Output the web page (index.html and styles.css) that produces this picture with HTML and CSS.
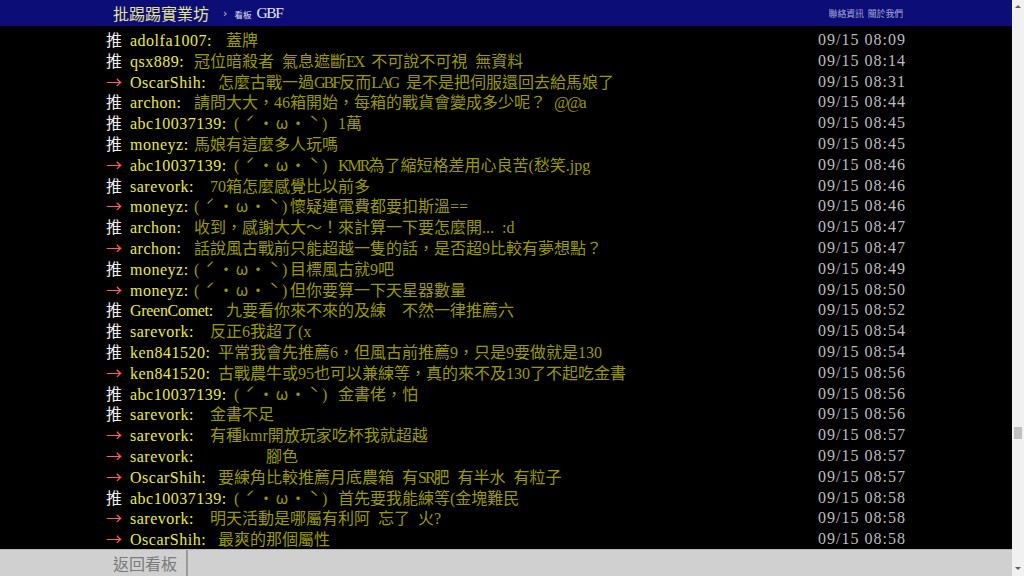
FILE: index.html
```html
<!DOCTYPE html>
<html lang="zh-Hant">
<head>
<meta charset="utf-8">
<title>GBF - 批踢踢實業坊</title>
<link rel="stylesheet" href="styles.css">
</head>
<body>
<div class="window">
  <div class="page">
    <header class="topbar">
      <div class="bar-inner">
        <div class="brand">
          <span class="logo">批踢踢實業坊</span>
          <span class="crumb-sep">›</span>
          <span class="crumb-label">看板</span>
          <span class="crumb-board">GBF</span>
        </div>
        <nav class="links">
          <span class="link">聯絡資訊</span>
          <span class="link">關於我們</span>
        </nav>
      </div>
    </header>

    <main class="screen">
      <div class="screen-inner">
        <div class="push"><div class="push-main"><span class="tag t-push">推</span><span class="uid w12">adolfa1007: </span><span class="msg">蓋牌</span></div><span class="time">09/15 08:09</span></div>
        <div class="push"><div class="push-main"><span class="tag t-push">推</span><span class="uid w8">qsx889: </span><span class="msg">冠位暗殺者 氣息遮斷<span class="en">EX</span> 不可說不可視 無資料</span></div><span class="time">09/15 08:14</span></div>
        <div class="push"><div class="push-main"><span class="tag t-arrow">→</span><span class="uid w11">OscarShih: </span><span class="msg">怎麼古戰一過<span class="en">GBF</span>反而<span class="en">LAG</span> 是不是把伺服還回去給馬娘了</span></div><span class="time">09/15 08:31</span></div>
        <div class="push"><div class="push-main"><span class="tag t-push">推</span><span class="uid w8">archon: </span><span class="msg">請問大大，46箱開始，每箱的戰貨會變成多少呢？ <span class="en">@@</span>a</span></div><span class="time">09/15 08:44</span></div>
        <div class="push"><div class="push-main"><span class="tag t-push">推</span><span class="uid w13">abc10037139: </span><span class="msg"><span class="kao"><span class="h">(</span><span class="f">ˊ</span><span class="f">・</span><span class="f">ω</span><span class="f">・</span><span class="f">ˋ</span><span class="h">)</span></span> 1萬</span></div><span class="time">09/15 08:45</span></div>
        <div class="push"><div class="push-main"><span class="tag t-push">推</span><span class="uid w8">moneyz: </span><span class="msg">馬娘有這麼多人玩嗎</span></div><span class="time">09/15 08:45</span></div>
        <div class="push"><div class="push-main"><span class="tag t-arrow">→</span><span class="uid w13">abc10037139: </span><span class="msg"><span class="kao"><span class="h">(</span><span class="f">ˊ</span><span class="f">・</span><span class="f">ω</span><span class="f">・</span><span class="f">ˋ</span><span class="h">)</span></span> <span class="en">KMR</span>為了縮短格差用心良苦(愁笑.jpg</span></div><span class="time">09/15 08:46</span></div>
        <div class="push"><div class="push-main"><span class="tag t-push">推</span><span class="uid w10">sarevork: </span><span class="msg">70箱怎麼感覺比以前多</span></div><span class="time">09/15 08:46</span></div>
        <div class="push"><div class="push-main"><span class="tag t-arrow">→</span><span class="uid w8">moneyz: </span><span class="msg"><span class="kao"><span class="h">(</span><span class="f">ˊ</span><span class="f">・</span><span class="f">ω</span><span class="f">・</span><span class="f">ˋ</span><span class="h">)</span></span>懷疑連電費都要扣斯溫==</span></div><span class="time">09/15 08:46</span></div>
        <div class="push"><div class="push-main"><span class="tag t-push">推</span><span class="uid w8">archon: </span><span class="msg">收到，感謝大大～！來計算一下要怎麼開... :d</span></div><span class="time">09/15 08:47</span></div>
        <div class="push"><div class="push-main"><span class="tag t-arrow">→</span><span class="uid w8">archon: </span><span class="msg">話說風古戰前只能超越一隻的話，是否超9比較有夢想點？</span></div><span class="time">09/15 08:47</span></div>
        <div class="push"><div class="push-main"><span class="tag t-push">推</span><span class="uid w8">moneyz: </span><span class="msg"><span class="kao"><span class="h">(</span><span class="f">ˊ</span><span class="f">・</span><span class="f">ω</span><span class="f">・</span><span class="f">ˋ</span><span class="h">)</span></span>目標風古就9吧</span></div><span class="time">09/15 08:49</span></div>
        <div class="push"><div class="push-main"><span class="tag t-arrow">→</span><span class="uid w8">moneyz: </span><span class="msg"><span class="kao"><span class="h">(</span><span class="f">ˊ</span><span class="f">・</span><span class="f">ω</span><span class="f">・</span><span class="f">ˋ</span><span class="h">)</span></span>但你要算一下天星器數量</span></div><span class="time">09/15 08:50</span></div>
        <div class="push"><div class="push-main"><span class="tag t-push">推</span><span class="uid uid-tight w12">GreenComet: </span><span class="msg">九要看你來不來的及練  不然一律推薦六</span></div><span class="time">09/15 08:52</span></div>
        <div class="push"><div class="push-main"><span class="tag t-push">推</span><span class="uid w10">sarevork: </span><span class="msg">反正6我超了(x</span></div><span class="time">09/15 08:54</span></div>
        <div class="push"><div class="push-main"><span class="tag t-push">推</span><span class="uid w11">ken841520: </span><span class="msg">平常我會先推薦6，但風古前推薦9，只是9要做就是130</span></div><span class="time">09/15 08:54</span></div>
        <div class="push"><div class="push-main"><span class="tag t-arrow">→</span><span class="uid w11">ken841520: </span><span class="msg">古戰農牛或95也可以兼練等，真的來不及130了不起吃金書</span></div><span class="time">09/15 08:56</span></div>
        <div class="push"><div class="push-main"><span class="tag t-push">推</span><span class="uid w13">abc10037139: </span><span class="msg"><span class="kao"><span class="h">(</span><span class="f">ˊ</span><span class="f">・</span><span class="f">ω</span><span class="f">・</span><span class="f">ˋ</span><span class="h">)</span></span> 金書佬，怕</span></div><span class="time">09/15 08:56</span></div>
        <div class="push"><div class="push-main"><span class="tag t-push">推</span><span class="uid w10">sarevork: </span><span class="msg">金書不足</span></div><span class="time">09/15 08:56</span></div>
        <div class="push"><div class="push-main"><span class="tag t-arrow">→</span><span class="uid w10">sarevork: </span><span class="msg">有種kmr開放玩家吃杯我就超越</span></div><span class="time">09/15 08:57</span></div>
        <div class="push"><div class="push-main"><span class="tag t-arrow">→</span><span class="uid w10">sarevork: </span><span class="msg">       腳色</span></div><span class="time">09/15 08:57</span></div>
        <div class="push"><div class="push-main"><span class="tag t-arrow">→</span><span class="uid w11">OscarShih: </span><span class="msg">要練角比較推薦月底農箱 有<span class="en">SR</span>肥 有半水 有粒子</span></div><span class="time">09/15 08:57</span></div>
        <div class="push"><div class="push-main"><span class="tag t-push">推</span><span class="uid w13">abc10037139: </span><span class="msg"><span class="kao"><span class="h">(</span><span class="f">ˊ</span><span class="f">・</span><span class="f">ω</span><span class="f">・</span><span class="f">ˋ</span><span class="h">)</span></span> 首先要我能練等(金塊難民</span></div><span class="time">09/15 08:58</span></div>
        <div class="push"><div class="push-main"><span class="tag t-arrow">→</span><span class="uid w10">sarevork: </span><span class="msg">明天活動是哪屬有利阿 忘了 火?</span></div><span class="time">09/15 08:58</span></div>
        <div class="push"><div class="push-main"><span class="tag t-arrow">→</span><span class="uid w11">OscarShih: </span><span class="msg">最爽的那個屬性</span></div><span class="time">09/15 08:58</span></div>
      </div>
    </main>

    <footer class="actionbar">
      <div class="bar-inner">
        <span class="btn-back">返回看板</span>
      </div>
    </footer>
  </div>

  <div class="scrollbar">
    <span class="sb-up"></span>
    <div class="sb-track"><div class="sb-thumb"></div></div>
    <span class="sb-down"></span>
  </div>
</div>
</body>
</html>
```

FILE: styles.css
```css
html, body {
  margin: 0;
  padding: 0;
  width: 1024px;
  height: 576px;
  overflow: hidden;
  background: #000;
}

.window {
  display: flex;
  width: 1024px;
  height: 576px;
}

.page {
  flex: 1;
  min-width: 0;
  display: flex;
  flex-direction: column;
  background: #000;
}

.bar-inner {
  width: 800px;
  margin: 0 auto;
  height: 100%;
  display: flex;
  align-items: center;
  box-sizing: border-box;
}

/* top bar */
.topbar {
  flex: 0 0 26px;
  height: 26px;
  background: #0d0d78;
}

.topbar .bar-inner {
  justify-content: space-between;
  padding: 0 3px 0 7px;
}

.brand {
  display: flex;
  align-items: center;
}

.logo {
  font-family: "Noto Sans CJK TC", sans-serif;
  font-size: 16px;
  line-height: 26px;
  color: #e4e48e;
}

.crumb-sep {
  font-family: "DejaVu Sans", sans-serif;
  font-size: 11px;
  color: #c8c8d8;
  margin: 0 7px 0 14px;
}

.crumb-label {
  font-family: "Noto Sans CJK TC", sans-serif;
  font-size: 8.5px;
  color: #e0e0ee;
  margin-right: 5px;
  padding-top: 2px;
}

.crumb-board {
  font-family: "Liberation Serif", serif;
  font-size: 15.5px;
  letter-spacing: -1.4px;
  color: #e4e4f0;
}

.links {
  display: flex;
  gap: 4px;
}

.link {
  font-family: "Noto Sans CJK TC", sans-serif;
  font-size: 8.8px;
  color: #a9abd6;
}

/* push list */
.screen {
  flex: 1;
  min-height: 0;
  overflow: hidden;
  padding-top: 4px;
}

.screen-inner {
  width: 800px;
  margin: 0 auto;
}

.push {
  display: flex;
  justify-content: space-between;
  align-items: center;
  height: 20.8px;
  font-size: 16px;
}

.push-main {
  white-space: pre;
  line-height: 20.8px;
}

.tag {
  display: inline-block;
  width: 24px;
  font-family: "Noto Sans CJK TC", sans-serif;
}

.t-push {
  color: #f0f0f0;
}

.t-arrow {
  color: #ff5f5f;
}

.uid {
  display: inline-block;
  font-family: "Liberation Serif", serif;
  letter-spacing: 0.5px;
  color: #eaea48;
}

.uid-tight {
  letter-spacing: -0.3px;
}

.w8 { width: 64px; }
.w10 { width: 80px; }
.w11 { width: 88px; }
.w12 { width: 96px; }
.w13 { width: 104px; }

.msg {
  font-family: "Liberation Serif", "Noto Sans CJK TC", sans-serif;
  word-spacing: 0.25em;
  color: #9a9a00;
}

.en {
  letter-spacing: -2px;
}

.kao {
  font-family: "Noto Sans CJK TC", sans-serif;
}

.kao .h {
  display: inline-block;
  width: 8px;
  font-family: "Liberation Serif", serif;
}

.kao .f {
  display: inline-block;
  width: 16px;
  text-align: center;
}

.time {
  font-family: "Liberation Serif", serif;
  letter-spacing: 1px;
  color: #bdbdbd;
  white-space: pre;
  line-height: 20.8px;
}

/* bottom action bar */
.actionbar {
  flex: 0 0 27px;
  height: 27px;
  background: #d0d0d0;
  border-top: 1px solid #b8b8b8;
  box-sizing: border-box;
}

.btn-back {
  display: block;
  height: 100%;
  padding: 0 9px 0 7px;
  font-family: "Noto Sans CJK TC", sans-serif;
  font-size: 16px;
  line-height: 26px;
  color: #7a7a7a;
  border-right: 2px solid #9a9a9a;
}

/* fake browser scrollbar */
.scrollbar {
  flex: 0 0 12px;
  width: 12px;
  background: #f1f1f1;
  display: flex;
  flex-direction: column;
  align-items: center;
}

.sb-up {
  width: 0;
  height: 0;
  margin-top: 5px;
  border-left: 3px solid transparent;
  border-right: 3px solid transparent;
  border-bottom: 3px solid #606060;
}

.sb-track {
  flex: 1;
  width: 100%;
  display: flex;
  justify-content: center;
}

.sb-thumb {
  width: 8px;
  height: 12px;
  margin-top: 419px;
  background: #c1c1c1;
}

.sb-down {
  width: 0;
  height: 0;
  margin-bottom: 6px;
  border-left: 3px solid transparent;
  border-right: 3px solid transparent;
  border-top: 3px solid #606060;
}
```
